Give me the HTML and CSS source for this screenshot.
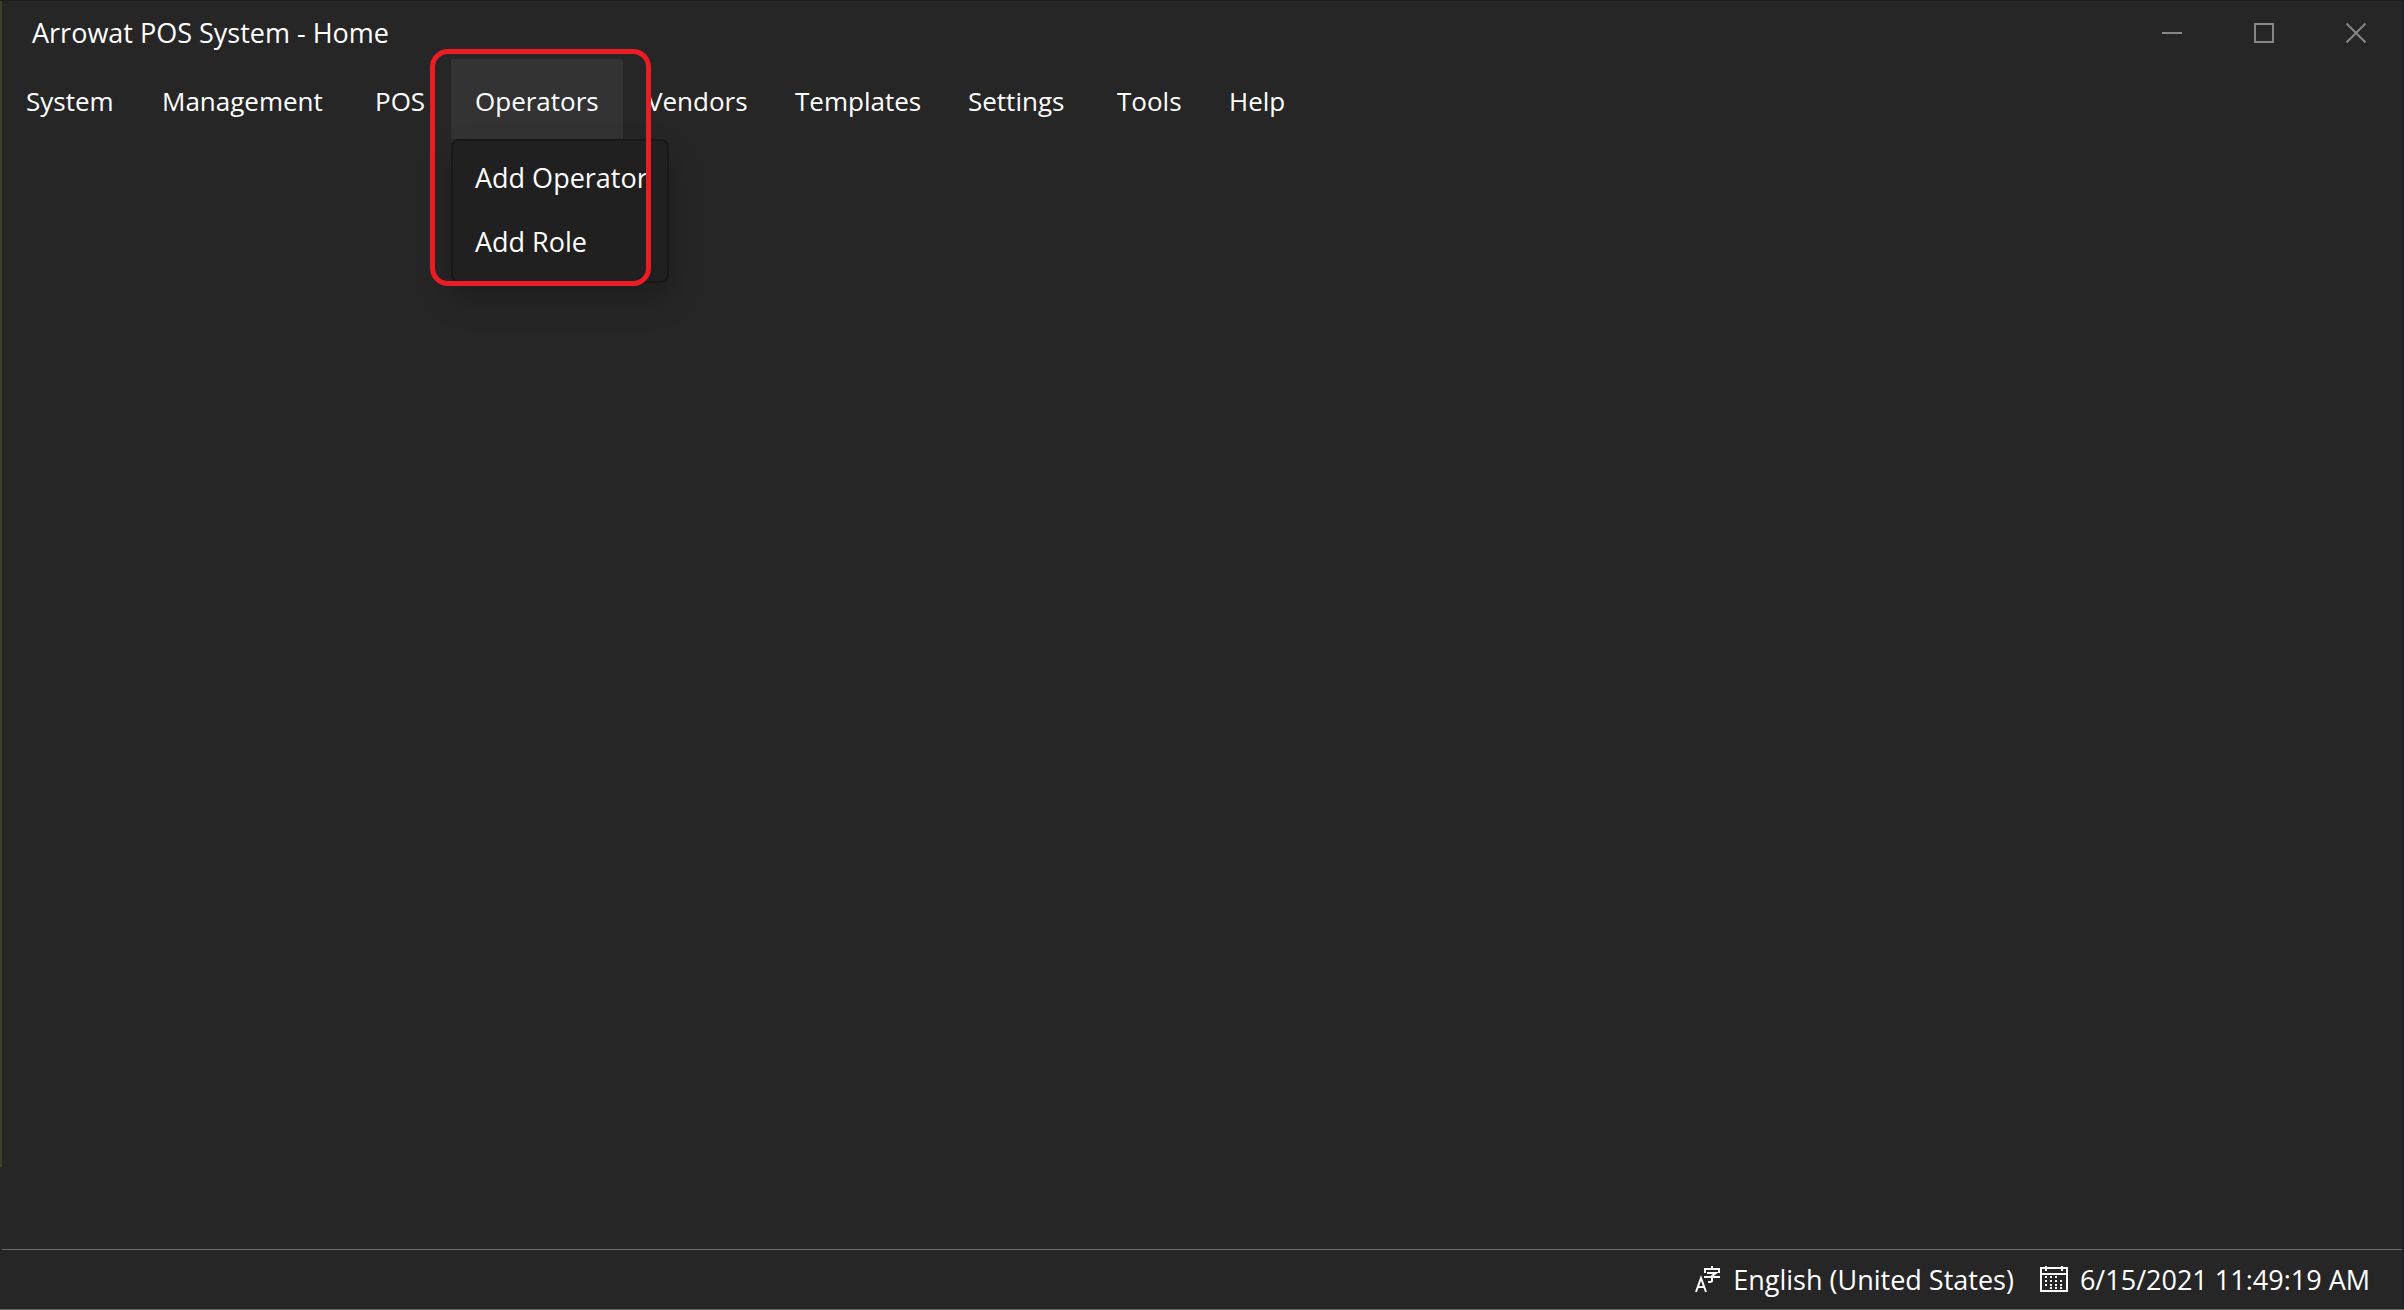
FILE: index.html
```html
<!DOCTYPE html>
<html lang="en">
<head>
<meta charset="utf-8">
<title>Arrowat POS System - Home</title>
<link rel="stylesheet" href="styles.css">
</head>
<body>
<div class="window">
  <header class="titlebar">
    <h1 class="title">Arrowat POS System - Home</h1>
    <div class="controls">
      <button class="control" type="button" aria-label="Minimize"><svg width="20" height="20"><path d="M0 10H20"/></svg></button>
      <button class="control" type="button" aria-label="Maximize"><svg width="20" height="20"><path d="M1 1H19V19H1Z"/></svg></button>
      <button class="control" type="button" aria-label="Close"><svg width="20" height="20"><path d="M.5 .5L19.500 19.500M19.500 .5L.5 19.500"/></svg></button>
    </div>
  </header>
  <nav class="menubar">
    <button class="menu" type="button">System</button>
    <button class="menu" type="button">Management</button>
    <button class="menu" type="button">POS</button>
    <div class="menu-group">
      <button class="menu open" type="button" aria-expanded="true">Operators</button>
      <div class="popup">
        <button class="popup-item" type="button">Add Operator</button>
        <button class="popup-item" type="button">Add Role</button>
      </div>
      <div class="highlight"></div>
    </div>
    <button class="menu" type="button">Vendors</button>
    <button class="menu" type="button">Templates</button>
    <button class="menu" type="button">Settings</button>
    <button class="menu" type="button">Tools</button>
    <button class="menu" type="button">Help</button>
  </nav>
  <main class="workspace"></main>
  <footer class="statusbar">
    <div class="status">
      <svg width="26" height="28" viewBox="0 0 26 28"><path d="M1 26L6 12L11 26M3 21H9" stroke-width="2"/><path d="M17 0V3M10 7V3H24V7M12 7H21L17 10V15Q17 16 13 16M9 11H25" stroke-width="2"/></svg>
      <span>English (United States)</span>
    </div>
    <div class="status">
      <svg width="28" height="28" viewBox="0 0 28 28"><path d="M1 2H27V25H1ZM1 8H27M6 0V5M22 0V5" stroke-width="2"/><path d="M5 11H18M5 15H24M5 19H24M10 22H24" stroke-width="2" stroke-dasharray="2 3"/></svg>
      <time datetime="2021-06-15T11:49:19">6/15/2021 11:49:19 AM</time>
    </div>
  </footer>
</div>
</body>
</html>
```
FILE: styles.css
```css
* { box-sizing: border-box; }
body {
  margin: 0;
  background: #262626;
  color: #fff;
  font: 27px/36px "Segoe UI", "Open Sans", "Noto Sans", sans-serif;
}
button {
  border: 0;
  padding: 0;
  background: none;
  color: inherit;
  font: inherit;
}
svg { display: block; fill: none; stroke: currentColor; }
.window {
  display: flex;
  flex-direction: column;
  min-height: 100vh;
  padding: 0 2px;
  border-top: 1px solid #1e1e1e;
  border-bottom: 1px solid #666;
  background:
    linear-gradient(#39402a, #39402a) left top / 2px calc(100% - 142px) no-repeat,
    linear-gradient(#1e1f20, #1e1f20) right top / 2px 100% no-repeat,
    #262626;
}
.titlebar {
  display: flex;
  justify-content: space-between;
  height: 58px;
  padding-top: 6px;
}
.title { margin: 0; padding: 8px 30px; font-size: 27px; font-weight: 400; line-height: 36px; }
.controls { display: flex; color: #868686; }
.control { display: grid; place-items: center; width: 92px; }
.control svg { stroke-width: 2px; }
.menubar {
  display: grid;
  grid-template-columns: 136px 213px 100px 172px 148px 173px 149px 112px 106px;
  height: 80px;
  font-size: 26px;
}
.menu { width: 100%; height: 80px; padding: 3px 0 0 24px; text-align: left; }
.menu.open { background: #333; }
.menu-group { position: relative; }
.popup {
  position: absolute;
  top: 100%;
  left: 0;
  width: 218px;
  padding: 5px 0 7px;
  border: 2px solid #181818;
  border-radius: 8px;
  background: #202020;
  box-shadow: 0 16px 32px rgba(0, 0, 0, .22);
  font-size: 27px;
}
.popup-item { display: block; width: 100%; height: 64px; padding: 0 22px; text-align: left; white-space: nowrap; }
.highlight {
  position: absolute;
  top: -10px;
  left: -21px;
  width: 221px;
  height: 237px;
  border: 5px solid #ed1c24;
  border-radius: 18px;
  pointer-events: none;
}
.workspace { flex: 1; }
.statusbar {
  display: flex;
  justify-content: flex-end;
  gap: 26px;
  height: 60px;
  padding-right: 32px;
  border-top: 1px solid #6a6a6a;
}
.status { display: flex; align-items: center; gap: 12px; }
```
